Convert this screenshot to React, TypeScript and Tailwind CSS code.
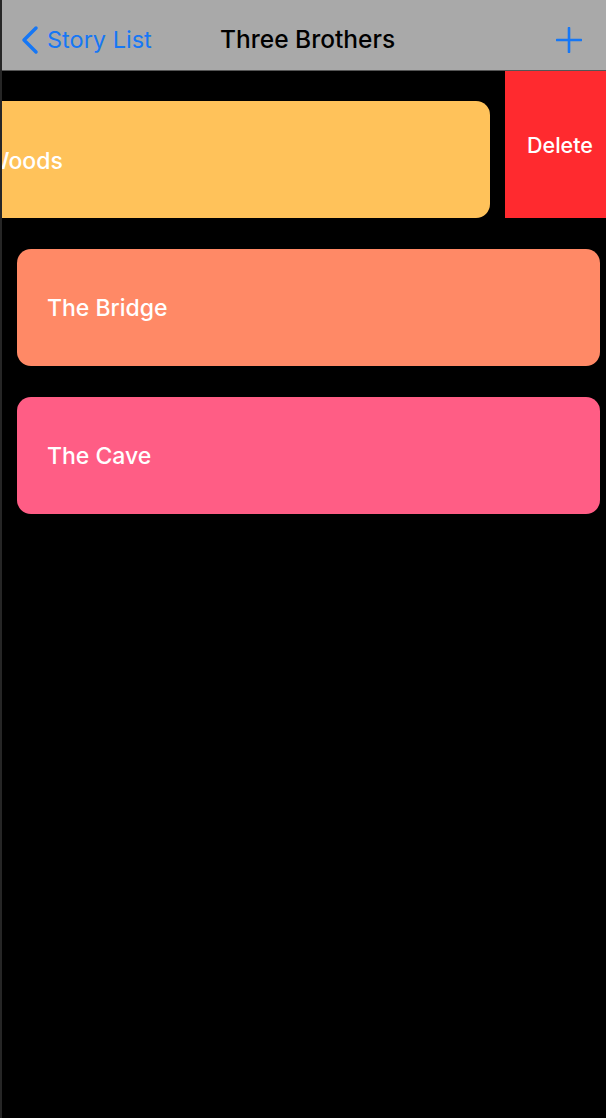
const stories = [
  { title: "The Bridge", color: "bg-[#ff8966]" },
  { title: "The Cave", color: "bg-[#ff5d85]" },
];

export default function App() {
  return (
    <div className="flex min-h-[1118px] w-[606px] bg-black font-['Inter','Roboto',sans-serif]">
      <div className="w-[2px] shrink-0 bg-[#262626]" />
      <div className="flex min-w-0 flex-1 flex-col">
        <header className="relative flex h-[71px] items-center border-b border-[#555] bg-[#a9a9a9] pt-[9px]">
          <button className="flex items-center gap-[7px] pl-[18px] text-[23.5px] text-[#1677f5]">
            <svg width="20" height="30" viewBox="0 0 20 30" fill="none">
              <path d="M16 3 L4 15 L16 27" stroke="#1677f5" strokeWidth="3.5" strokeLinecap="round" strokeLinejoin="round" />
            </svg>
            <span>Story List</span>
          </button>
          <h1 className="absolute left-[218px] top-[24px] text-[24.5px] font-medium leading-[30px] text-black">Three Brothers</h1>
          <button className="ml-auto pr-[24px]">
            <svg width="26" height="26" viewBox="0 0 26 26">
              <path d="M13 1V25M1 13H25" stroke="#1677f5" strokeWidth="2.6" strokeLinecap="round" />
            </svg>
          </button>
        </header>

        <div className="flex h-[147px] overflow-hidden">
          <div className="flex min-w-0 flex-1 overflow-hidden pt-[30px]">
            <div className="ml-[-95px] flex h-[117px] w-[583px] shrink-0 items-center rounded-[14px] bg-[#ffc25a] pl-[31px] pt-[3px] text-[23px] font-medium text-white">
              The Woods
            </div>
          </div>
          <div className="flex w-[101px] shrink-0 items-center justify-center bg-[#ff2a2f] pl-[9px] pt-[2px] text-[21.5px] font-medium text-white">
            Delete
          </div>
        </div>

        <div className="flex flex-col gap-[31px] pl-[15px] pr-[6px] pt-[31px]">
          {stories.map((s) => (
            <div
              key={s.title}
              className={`flex h-[117px] items-center rounded-[14px] pl-[30px] pt-[2px] text-[23px] font-medium text-white ${s.color}`}
            >
              {s.title}
            </div>
          ))}
        </div>
      </div>
    </div>
  );
}
